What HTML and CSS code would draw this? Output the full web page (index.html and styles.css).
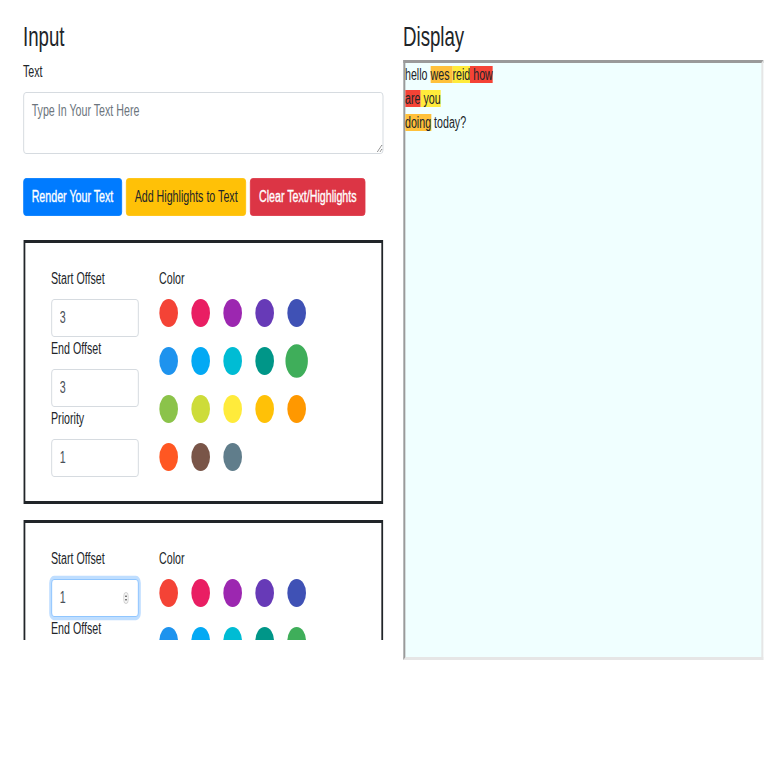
FILE: index.html
```html
<!DOCTYPE html>
<html lang="en">
<head>
<meta charset="utf-8">
<title>Highlighter</title>
<link rel="stylesheet" href="styles.css">
</head>
<body>
<div class="stage">
  <div class="layout">
    <section class="col">
      <h3 class="title">Input</h3>
      <label class="lbl">Text</label>
      <textarea class="text-input" placeholder="Type In Your Text Here"></textarea>
      <div class="btns">
        <button class="btn btn-primary">Render Your Text</button>
        <button class="btn btn-warning">Add Highlights to Text</button>
        <button class="btn btn-danger">Clear Text/Highlights</button>
      </div>
      <div class="cards">
        <div class="card">
          <div class="fields">
            <label class="lbl">Start Offset</label>
            <input class="field-input" type="text" value="3">
            <label class="lbl">End Offset</label>
            <input class="field-input" type="text" value="3">
            <label class="lbl">Priority</label>
            <input class="field-input" type="text" value="1">
          </div>
          <div class="colors">
            <label class="lbl">Color</label>
            <div class="swatches">
              <span class="swatch c-red"></span><span class="swatch c-pink"></span><span class="swatch c-purple"></span><span class="swatch c-dpurple"></span><span class="swatch c-indigo"></span>
              <span class="swatch c-blue"></span><span class="swatch c-lblue"></span><span class="swatch c-cyan"></span><span class="swatch c-teal"></span><span class="swatch c-green active"></span>
              <span class="swatch c-lgreen"></span><span class="swatch c-lime"></span><span class="swatch c-yellow"></span><span class="swatch c-amber"></span><span class="swatch c-orange"></span>
              <span class="swatch c-dorange"></span><span class="swatch c-brown"></span><span class="swatch c-bgrey"></span>
            </div>
          </div>
        </div>
        <div class="card">
          <div class="fields">
            <label class="lbl">Start Offset</label>
            <div class="spin-wrap">
              <input class="field-input focused" type="text" value="1">
              <svg class="spinner" viewBox="0 0 8 12" width="8" height="12" aria-hidden="true">
                <rect x="0.5" y="0.5" width="7" height="11" rx="3.5" fill="#f6f6f6" stroke="#b8b8b8" stroke-width="0.8"/>
                <path d="M2.3 5 L4 2.8 L5.7 5 Z" fill="#666"/>
                <path d="M2.3 7 L4 9.2 L5.7 7 Z" fill="#666"/>
              </svg>
            </div>
            <label class="lbl">End Offset</label>
            <input class="field-input" type="text" value="1">
            <label class="lbl">Priority</label>
            <input class="field-input" type="text" value="1">
          </div>
          <div class="colors">
            <label class="lbl">Color</label>
            <div class="swatches">
              <span class="swatch c-red"></span><span class="swatch c-pink"></span><span class="swatch c-purple"></span><span class="swatch c-dpurple"></span><span class="swatch c-indigo"></span>
              <span class="swatch c-blue"></span><span class="swatch c-lblue"></span><span class="swatch c-cyan"></span><span class="swatch c-teal"></span><span class="swatch c-green"></span>
              <span class="swatch c-lgreen"></span><span class="swatch c-lime"></span><span class="swatch c-yellow"></span><span class="swatch c-amber"></span><span class="swatch c-orange"></span>
              <span class="swatch c-dorange"></span><span class="swatch c-brown"></span><span class="swatch c-bgrey"></span>
            </div>
          </div>
        </div>
      </div>
    </section>
    <section class="col">
      <h3 class="title">Display</h3>
      <div class="display">hello <span class="hl hl-amber">wes </span><span class="hl hl-yellow">reid</span><span class="hl hl-red"> how</span><br><span class="hl hl-red">are</span><span class="hl hl-yellow"> you</span><br><span class="hl hl-amber">doing</span> today?</div>
    </section>
  </div>
</div>
</body>
</html>
```

FILE: styles.css
```css
html, body {
  margin: 0;
  padding: 0;
  overflow: hidden;
  background: #fff;
}

body {
  font-family: "Liberation Sans", Arial, sans-serif;
  font-size: 16px;
  line-height: 1.5;
  color: #212529;
}

.stage {
  width: 1168px;
  transform: scaleX(0.66667);
  transform-origin: 0 0;
}

.layout {
  display: grid;
  grid-template-columns: 540px 540px;
  column-gap: 30px;
  padding-left: 34.5px;
  align-items: start;
}

.title {
  font-size: 28px;
  font-weight: 400;
  line-height: 33.6px;
  margin: 20px 0 6.4px;
}

.lbl {
  display: block;
  margin-bottom: 8px;
}

.text-input {
  display: block;
  box-sizing: border-box;
  width: 540px;
  height: 62px;
  margin: 0 0 24px;
  padding: 6px 12px;
  border: 1px solid #ced4da;
  border-radius: 4px;
  font: inherit;
  color: #495057;
  resize: vertical;
}

.text-input::placeholder {
  color: #6c757d;
  opacity: 1;
}

.btns {
  display: flex;
  gap: 6px;
  margin-bottom: 24px;
}

.btn {
  font-family: inherit;
  font-size: 16px;
  line-height: 24px;
  padding: 6px 12px;
  border: 1px solid transparent;
  border-radius: 4px;
}

.btn-primary { background: #007bff; border-color: #007bff; color: #fff; -webkit-text-stroke: 0.35px #fff; }
.btn-warning { background: #ffc107; border-color: #ffc107; color: #212529; }
.btn-danger { background: #dc3545; border-color: #dc3545; color: #fff; -webkit-text-stroke: 0.35px #fff; }

.cards {
  height: 400px;
  overflow: hidden;
}

.card {
  display: flex;
  gap: 31px;
  border: 3px solid #212529;
  padding: 24px 24px 24px 39px;
  margin-bottom: 16px;
}

.fields {
  display: flex;
  flex-direction: column;
  width: 131px;
}

.field-input {
  display: block;
  box-sizing: border-box;
  width: 131px;
  height: 38px;
  margin: 0;
  padding: 6px 12px;
  border: 1px solid #ced4da;
  border-radius: 4px;
  font: inherit;
  color: #495057;
  background: #fff;
}

.field-input.focused {
  border-color: #80bdff;
  box-shadow: 0 0 0 3.2px rgba(0, 123, 255, 0.25);
  outline: none;
}

.spin-wrap {
  position: relative;
}

.spinner {
  position: absolute;
  right: 15px;
  top: 13px;
}

.swatches {
  display: flex;
  flex-wrap: wrap;
  width: 240px;
  margin-bottom: -20px;
}

.swatch {
  width: 28px;
  height: 28px;
  border-radius: 50%;
  margin: 0 20px 20px 0;
}

.swatch.active { transform: scale(1.2); }

.c-red { background: #f44336; }
.c-pink { background: #e91e63; }
.c-purple { background: #9c27b0; }
.c-dpurple { background: #673ab7; }
.c-indigo { background: #3f51b5; }
.c-blue { background: #1e93ee; }
.c-lblue { background: #03a9f4; }
.c-cyan { background: #00bcd4; }
.c-teal { background: #009688; }
.c-green { background: #3fae5a; }
.c-lgreen { background: #8bc34a; }
.c-lime { background: #cddc39; }
.c-yellow { background: #ffeb3b; }
.c-amber { background: #ffc107; }
.c-orange { background: #ff9800; }
.c-dorange { background: #ff5722; }
.c-brown { background: #795548; }
.c-bgrey { background: #607d8b; }

.display {
  box-sizing: border-box;
  height: 600px;
  border-style: solid;
  border-width: 3px;
  border-color: #9a9a9a #e6e6e6 #e6e6e6 #9a9a9a;
  background: #f0ffff;
  line-height: 24px;
}

.hl-amber { background: #ffc13b; }
.hl-yellow { background: #ffeb3b; }
.hl-red { background: #f44336; }
```
